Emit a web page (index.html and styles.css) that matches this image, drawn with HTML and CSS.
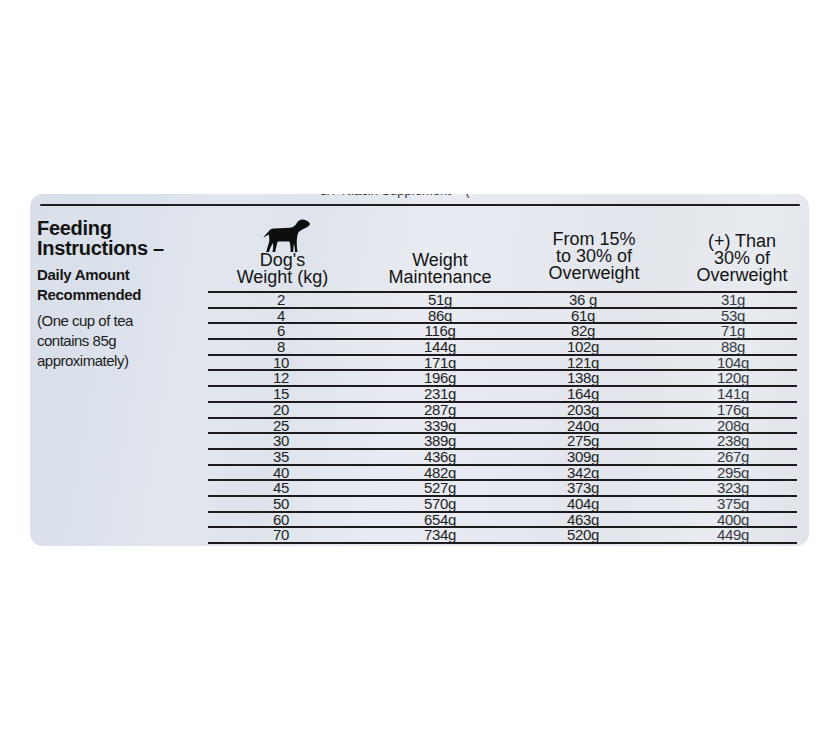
FILE: index.html
```html
<!DOCTYPE html>
<html lang="en">
<head>
<meta charset="utf-8">
<title>Feeding Instructions</title>
<link rel="stylesheet" href="styles.css">
</head>
<body>
<div class="page">
  <div class="card">
    <div class="cut">3/7 Niacin Supplement&nbsp;&nbsp;&nbsp;&nbsp;(</div>
    <div class="rule"></div>
    <div class="body">
      <div class="side">
        <div class="title">Feeding<br>Instructions –</div>
        <div class="sub">Daily Amount<br>Recommended</div>
        <div class="note">(One cup of tea<br>contains 85g<br>approximately)</div>
      </div>
      <div class="table">
        <div class="row head">
          <div class="hc h1">
            <svg class="dog" viewBox="0 0 48 34" width="48" height="34" aria-hidden="true">
              <path d="M47.6,4 L46,2.6 C44.5,1.6 43,0.6 40.5,0.6 C38,0.6 36,1.8 34.8,4 C33.5,6.4 31.5,8.2 28,8.8 L12,9.6 C9.5,9.8 7.8,10.8 6.6,12.4 C4.6,14.2 2.6,16.2 1.4,18.6 C3.4,17.6 5,16.4 6.8,15.4 C7.2,18.4 7.6,20.4 7.2,22.4 C6.4,25.6 5.2,29 4.2,33 L7,33 C7.8,29.6 9.6,26.4 11,24 C11.4,27 11.2,30.2 10.4,33 L13.2,33 C14,29.6 14.6,26 15.6,22.6 L27.4,22.4 C28.4,25.6 28.8,29.4 28.6,33 L31.2,33 C31.4,29.6 31.6,26.6 32,24.4 C32.6,27.2 33,30.2 33,33 L35.6,33 C35,29 34.6,25 34.8,21.2 C35,18.6 35.4,15.8 36.4,13.4 C38.2,11.6 40.6,10.2 43.4,9 C45,8.4 46.6,7 47.6,6 L48,5 Z"/>
            </svg>
            <div>Dog's<br>Weight (kg)</div>
          </div>
          <div class="hc h2">Weight<br>Maintenance</div>
          <div class="hc h3">From 15%<br>to 30% of<br>Overweight</div>
          <div class="hc h4">(+) Than<br>30% of<br>Overweight</div>
        </div>
        <div class="row"><span class="c1">2</span><span class="c2">51g</span><span class="c3">36 g</span><span class="c4">31g</span></div>
        <div class="row"><span class="c1">4</span><span class="c2">86g</span><span class="c3">61g</span><span class="c4">53g</span></div>
        <div class="row"><span class="c1">6</span><span class="c2">116g</span><span class="c3">82g</span><span class="c4">71g</span></div>
        <div class="row"><span class="c1">8</span><span class="c2">144g</span><span class="c3">102g</span><span class="c4">88g</span></div>
        <div class="row"><span class="c1">10</span><span class="c2">171g</span><span class="c3">121g</span><span class="c4">104g</span></div>
        <div class="row"><span class="c1">12</span><span class="c2">196g</span><span class="c3">138g</span><span class="c4">120g</span></div>
        <div class="row"><span class="c1">15</span><span class="c2">231g</span><span class="c3">164g</span><span class="c4">141g</span></div>
        <div class="row"><span class="c1">20</span><span class="c2">287g</span><span class="c3">203g</span><span class="c4">176g</span></div>
        <div class="row"><span class="c1">25</span><span class="c2">339g</span><span class="c3">240g</span><span class="c4">208g</span></div>
        <div class="row"><span class="c1">30</span><span class="c2">389g</span><span class="c3">275g</span><span class="c4">238g</span></div>
        <div class="row"><span class="c1">35</span><span class="c2">436g</span><span class="c3">309g</span><span class="c4">267g</span></div>
        <div class="row"><span class="c1">40</span><span class="c2">482g</span><span class="c3">342g</span><span class="c4">295g</span></div>
        <div class="row"><span class="c1">45</span><span class="c2">527g</span><span class="c3">373g</span><span class="c4">323g</span></div>
        <div class="row"><span class="c1">50</span><span class="c2">570g</span><span class="c3">404g</span><span class="c4">375g</span></div>
        <div class="row"><span class="c1">60</span><span class="c2">654g</span><span class="c3">463g</span><span class="c4">400g</span></div>
        <div class="row"><span class="c1">70</span><span class="c2">734g</span><span class="c3">520g</span><span class="c4">449g</span></div>
      </div>
    </div>
  </div>
</div>
</body>
</html>
```
FILE: styles.css
```css
html, body {
  margin: 0;
  padding: 0;
  background: #ffffff;
}

body {
  font-family: "Liberation Sans", Arial, Helvetica, sans-serif;
  color: #161616;
}

.page {
  width: 840px;
  height: 740px;
  padding: 194px 0 0 30px;
  box-sizing: border-box;
}

.card {
  width: 779px;
  height: 352px;
  border-radius: 13px;
  overflow: hidden;
  box-sizing: border-box;
  background:
    linear-gradient(100deg,
      #d8dfe9 0%,
      #dce2eb 14%,
      #e2e7ef 24%,
      #dfe4ec 34%,
      #e8ebf1 48%,
      #e6e9ef 62%,
      #e2e6ec 74%,
      #e8ebf0 88%,
      #dfe3e9 100%);
}

.cut {
  height: 14px;
  margin-top: -10px;
  padding-left: 290px;
  font-size: 13px;
  line-height: 14px;
  color: #2a2d33;
  white-space: nowrap;
}

.rule {
  height: 2px;
  margin: 6px 9px 0 10px;
  background: #1f1f1f;
  border-radius: 1px;
}

.body {
  display: flex;
  padding-left: 7px;
}

.side {
  width: 171px;
  padding-top: 12px;
  flex: none;
}

.title {
  font-size: 20px;
  line-height: 20px;
  font-weight: bold;
  letter-spacing: -0.3px;
  color: #141414;
}

.sub {
  margin-top: 7px;
  font-size: 15px;
  line-height: 20px;
  font-weight: bold;
  letter-spacing: -0.3px;
  color: #161616;
}

.note {
  margin-top: 6px;
  font-size: 15px;
  line-height: 20px;
  letter-spacing: -0.5px;
  color: #1c1c1c;
}

.table {
  width: 589px;
  flex: none;
}

.row {
  display: grid;
  grid-template-columns: 146px 172px 136px 135px;
  height: 15.7px;
  box-sizing: border-box;
  border-bottom: 2px solid #1c1c1c;
  align-items: end;
  font-size: 15px;
  line-height: 14px;
  text-align: center;
  color: #1e1f22;
  letter-spacing: -0.3px;
}

.row .c3 {
  padding-right: 22px;
}

.row .c4 {
  padding-left: 7px;
  color: #353a42;
}

.row.head {
  height: 87px;
  font-size: 18px;
  line-height: 17px;
  letter-spacing: 0;
  color: #141414;
}

.hc {
  display: flex;
  flex-direction: column;
  align-items: center;
  justify-content: flex-end;
  padding-bottom: 5px;
  height: 100%;
  box-sizing: border-box;
}

.h1 {
  padding-left: 3px;
}

.h3 {
  padding-bottom: 9px;
}

.h4 {
  padding-left: 25px;
  padding-bottom: 7px;
}

.dog {
  display: block;
  fill: #0e0e0e;
  margin-left: 6px;
  margin-bottom: -1px;
}
```
